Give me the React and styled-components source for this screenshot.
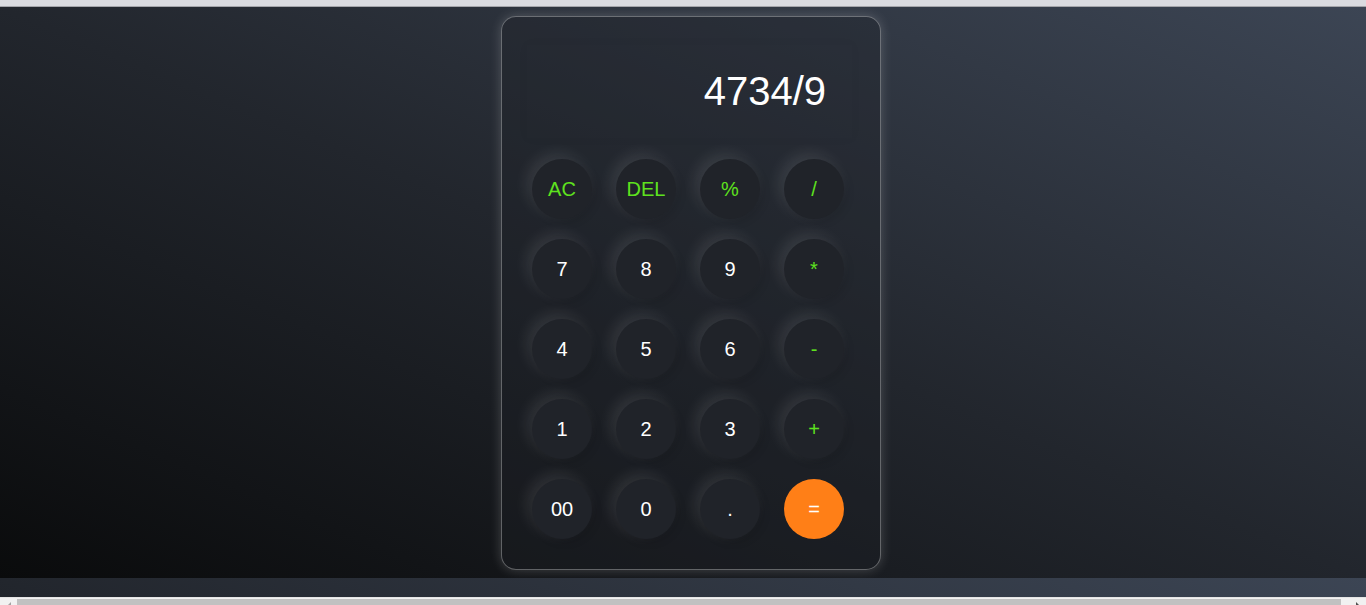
import React, { useState } from "react";
import styled, { createGlobalStyle } from "styled-components";

const GlobalStyle = createGlobalStyle`
    html, body {
        margin: 0;
        padding: 0;
        background: #dadbe0;
        overflow: hidden;
    }
    * {
        box-sizing: border-box;
    }
`;

const bgGradient = "linear-gradient(to top right, #0a0b0c 0%, #22262d 50%, #3c4554 100%)";

const Page = styled.div`
    display: flex;
    flex-direction: column;
    width: 1366px;
    height: 605px;
    font-family: "Liberation Sans", Arial, sans-serif;
`;

const TopStrip = styled.div`
    height: 7px;
    background: #dadbe0;
    border-bottom: 1px solid #a4a5aa;
`;

const Main = styled.main`
    height: 571px;
    background: ${bgGradient};
    display: flex;
    justify-content: center;
    padding: 9px 0 0 16px;
`;

const Band = styled.div`
    height: 19px;
    background: ${bgGradient};
    background-size: 100% 571px;
    background-position: top;
    background-repeat: no-repeat;
`;

const Scrollbar = styled.div`
    height: 8px;
    background: #f1f1f1;
    border-top: 1px solid #e4e4e4;
    display: flex;
    align-items: flex-start;
    padding-top: 1px;
`;

const Arrow = styled.div`
    width: 17px;
    height: 7px;
    display: flex;
    justify-content: center;
    padding-top: 3px;
    &::before {
        content: "";
        width: 0;
        height: 0;
        border-top: 4px solid transparent;
        border-bottom: 4px solid transparent;
        ${p => p.$dir === "left" ? "border-right: 4px solid #a3a3a3;" : "border-left: 4px solid #505050;"}
    }
`;

const Thumb = styled.div`
    flex: 1;
    height: 7px;
    background: #c1c1c1;
    margin-right: 8px;
`;

const Card = styled.div`
    width: 380px;
    height: 554px;
    border: 1px solid rgba(255, 255, 255, 0.32);
    border-radius: 15px;
    background: rgba(28, 31, 38, 0.35);
    box-shadow: 0 0 12px rgba(255, 255, 255, 0.2);
    padding: 28px 0 0 30px;
`;

const Display = styled.div`
    width: 325px;
    height: 93px;
    margin-left: -5px;
    padding-right: 26px;
    display: flex;
    align-items: center;
    justify-content: flex-end;
    color: #ffffff;
    font-size: 40px;
    box-shadow: 0 0 10px rgba(0, 0, 0, 0.04);
`;

const Keys = styled.div`
    display: grid;
    grid-template-columns: repeat(4, 60px);
    column-gap: 24px;
    row-gap: 20px;
    margin-top: 21px;
`;

const Key = styled.button`
    width: 60px;
    height: 60px;
    border: none;
    border-radius: 50%;
    padding: 0;
    font-family: "Liberation Sans", Arial, sans-serif;
    font-size: 20px;
    cursor: pointer;
    color: ${p => p.$op ? "#5ee21e" : "#ffffff"};
    background: ${p => p.$equal ? "#ff7f17" : "#202329"};
    box-shadow: ${p => p.$equal
        ? "none"
        : "-5px -5px 15px rgba(255, 255, 255, 0.1), 3px 3px 8px rgba(0, 0, 0, 0.12)"};
`;

const keys = [
    { label: "AC", op: true }, { label: "DEL", op: true }, { label: "%", op: true }, { label: "/", op: true },
    { label: "7" }, { label: "8" }, { label: "9" }, { label: "*", op: true },
    { label: "4" }, { label: "5" }, { label: "6" }, { label: "-", op: true },
    { label: "1" }, { label: "2" }, { label: "3" }, { label: "+", op: true },
    { label: "00" }, { label: "0" }, { label: "." }, { label: "=", equal: true },
];

const App = () => {
    const [value, setValue] = useState("4734/9");

    const press = (label) => {
        if (label === "AC") return setValue("");
        if (label === "DEL") return setValue(value.slice(0, -1));
        if (label === "=") {
            try {
                // eslint-disable-next-line no-new-func
                setValue(String(Function("return (" + value + ")")()));
            } catch (e) {
                setValue("Error");
            }
            return;
        }
        setValue(value + label);
    };

    return (
        <Page>
            <GlobalStyle />
            <TopStrip />
            <Main>
                <Card>
                    <Display>{value}</Display>
                    <Keys>
                        {keys.map(k => (
                            <Key key={k.label} $op={k.op} $equal={k.equal} onClick={() => press(k.label)}>
                                {k.label}
                            </Key>
                        ))}
                    </Keys>
                </Card>
            </Main>
            <Band />
            <Scrollbar>
                <Arrow $dir="left" />
                <Thumb />
                <Arrow $dir="right" />
            </Scrollbar>
        </Page>
    );
};

export default App;
